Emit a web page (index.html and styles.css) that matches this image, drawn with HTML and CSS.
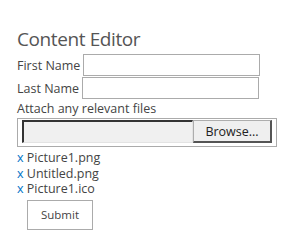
FILE: index.html
```html
<!DOCTYPE html>
<html lang="en">
<head>
    <meta charset="UTF-8">
    <title>Content Editor</title>
    <link rel="stylesheet" href="styles.css">
</head>
<body>
    <div class="editor">
        <h1>Content Editor</h1>
        <div class="field-row">
            <label for="firstName">First Name</label>
            <input type="text" id="firstName" class="text-input">
        </div>
        <div class="field-row">
            <label for="lastName">Last Name</label>
            <input type="text" id="lastName" class="text-input">
        </div>
        <div class="attach-label">Attach any relevant files</div>
        <div class="file-box">
            <div class="file-path"></div>
            <button type="button" class="browse-btn">Browse...</button>
        </div>
        <ul class="file-list">
            <li><span class="remove">x</span> Picture1.png</li>
            <li><span class="remove">x</span> Untitled.png</li>
            <li><span class="remove">x</span> Picture1.ico</li>
        </ul>
        <button type="button" class="submit-btn">Submit</button>
    </div>
</body>
</html>
```

FILE: styles.css
```css
body {
    margin: 0;
    background: #fff;
    font-family: "Open Sans", Arial, sans-serif;
    color: #444;
}

.editor {
    padding: 26px 17px;
}

h1 {
    margin: 0 0 2px 0;
    font-size: 19px;
    letter-spacing: -0.4px;
    font-weight: 400;
    color: #555;
    line-height: 26px;
}

.field-row {
    display: flex;
    align-items: center;
    font-size: 12.5px;
    margin-bottom: 1px;
}

.field-row label {
    margin-right: 3px;
}

.text-input {
    width: 177px;
    height: 22px;
    box-sizing: border-box;
    border: 1px solid #ababab;
    margin: 0;
    padding: 0 4px;
}

.attach-label {
    font-size: 12.5px;
    line-height: 18px;
    margin-top: 1px;
}

.file-box {
    width: 260px;
    box-sizing: border-box;
    border: 1px solid #ababab;
    padding: 1px 4px 3px 4px;
    display: flex;
}

.file-path {
    width: 171px;
    height: 23px;
    box-sizing: border-box;
    background: #f0f0f0;
    border: 1px solid #e3e3e3;
    border-top: 2px solid #333;
    border-left: 2px solid #333;
}

.browse-btn {
    width: 79px;
    height: 23px;
    margin: 0;
    font-family: inherit;
    font-size: 12.5px;
    color: #222;
    background: #efefef;
    border: 1px solid #adadad;
    border-right: 2px solid #555;
    border-bottom: 2px solid #555;
}

.file-list {
    list-style: none;
    margin: 3px 0 0 0;
    padding: 0;
    font-size: 12.5px;
    line-height: 15.5px;
}

.remove {
    color: #0072c6;
}

.submit-btn {
    margin: 3px 0 0 10px;
    width: 66px;
    height: 30px;
    font-family: inherit;
    font-size: 11.5px;
    color: #444;
    background: #fff;
    border: 1px solid #ababab;
}
```
